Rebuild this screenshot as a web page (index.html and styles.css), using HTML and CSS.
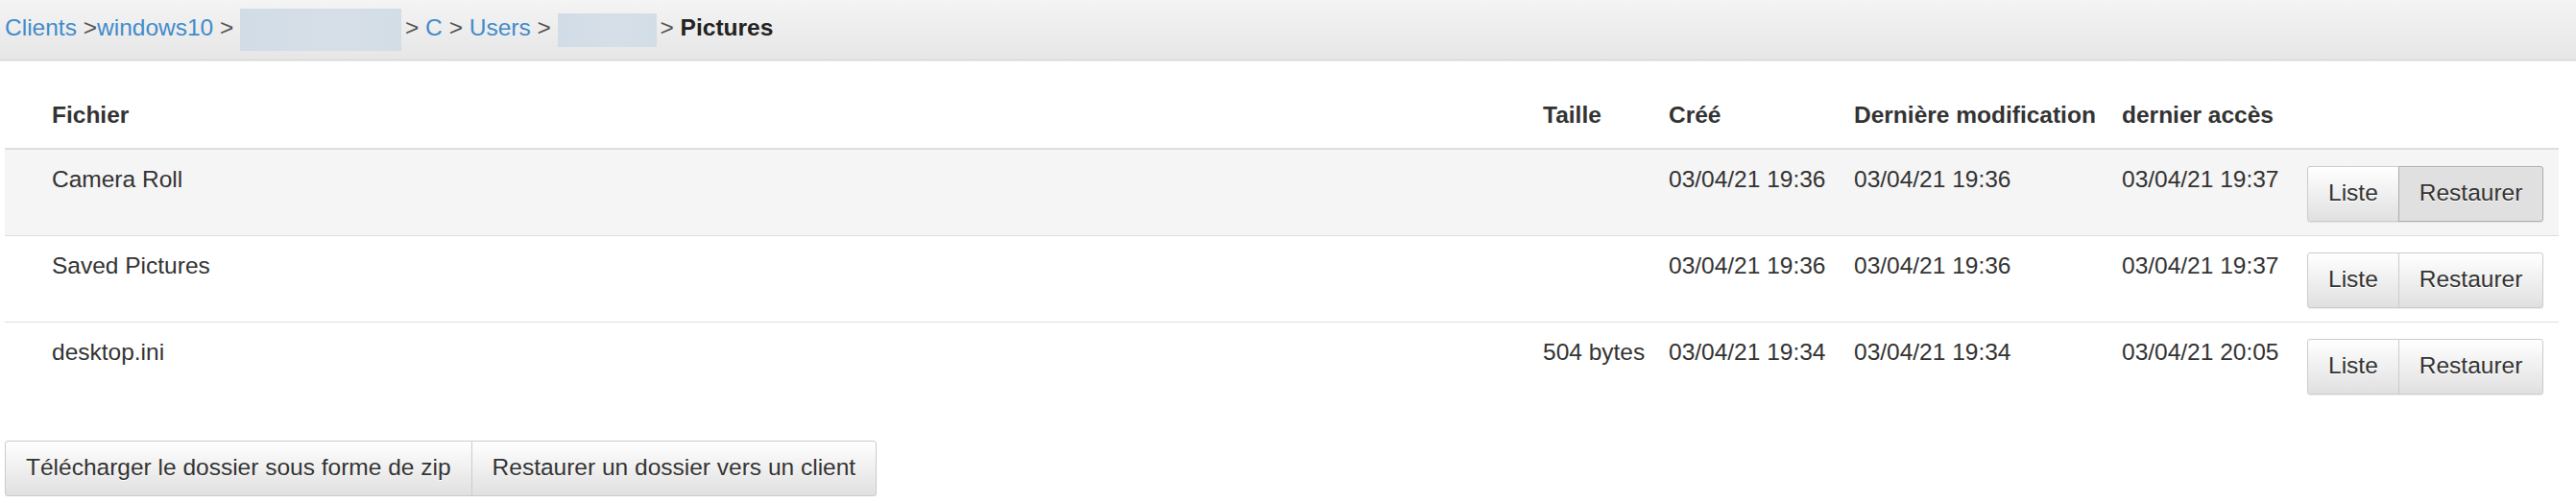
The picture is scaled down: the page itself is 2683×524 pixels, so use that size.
FILE: index.html
```html
<!DOCTYPE html>
<html lang="fr">
<head>
<meta charset="utf-8">
<title>Pictures</title>
<link rel="stylesheet" href="styles.css">
</head>
<body>
<nav class="crumbbar">
  <a href="#">Clients</a> <span class="sep">&gt;</span><a href="#">windows10</a> <span class="sep">&gt;</span> <span class="redact redact-wide"></span> <span class="sep">&gt;</span> <a href="#">C</a> <span class="sep">&gt;</span> <a href="#">Users</a> <span class="sep">&gt;</span> <span class="redact redact-small"></span> <span class="sep">&gt;</span> <strong class="current">Pictures</strong>
</nav>
<main class="content">
  <table class="files">
    <thead>
      <tr>
        <th class="col-name">Fichier</th>
        <th class="col-size">Taille</th>
        <th class="col-created">Créé</th>
        <th class="col-modified">Dernière modification</th>
        <th class="col-accessed">dernier accès</th>
        <th class="col-actions"></th>
      </tr>
    </thead>
    <tbody>
      <tr class="row-hover">
        <td class="cell-name">Camera Roll</td>
        <td></td>
        <td>03/04/21 19:36</td>
        <td>03/04/21 19:36</td>
        <td>03/04/21 19:37</td>
        <td class="cell-actions"><div class="btn-group"><button class="btn">Liste</button><button class="btn is-hover">Restaurer</button></div></td>
      </tr>
      <tr>
        <td class="cell-name">Saved Pictures</td>
        <td></td>
        <td>03/04/21 19:36</td>
        <td>03/04/21 19:36</td>
        <td>03/04/21 19:37</td>
        <td class="cell-actions"><div class="btn-group"><button class="btn">Liste</button><button class="btn">Restaurer</button></div></td>
      </tr>
      <tr>
        <td class="cell-name">desktop.ini</td>
        <td>504 bytes</td>
        <td>03/04/21 19:34</td>
        <td>03/04/21 19:34</td>
        <td>03/04/21 20:05</td>
        <td class="cell-actions"><div class="btn-group"><button class="btn">Liste</button><button class="btn">Restaurer</button></div></td>
      </tr>
    </tbody>
  </table>
  <div class="btn-group">
    <button class="btn">Télécharger le dossier sous forme de zip</button><button class="btn">Restaurer un dossier vers un client</button>
  </div>
</main>
</body>
</html>
```

FILE: styles.css
```css
html, body {
  margin: 0;
  padding: 0;
}

body {
  font-family: "Liberation Sans", Arial, Helvetica, sans-serif;
  font-size: 24.5px;
  line-height: 34px;
  color: #333;
  background: #fff;
}

.crumbbar {
  box-sizing: border-box;
  height: 63px;
  padding: 9px 5px 0;
  white-space: nowrap;
  background: linear-gradient(to bottom, #f4f4f4 0%, #e6e6e6 100%);
  border-bottom: 1px solid #d6d6d6;
  box-shadow: 0 1px 0 #ececec;
}

.crumbbar a {
  color: #428bca;
  text-decoration: none;
}

.sep {
  color: #555;
}

.current {
  color: #222;
  font-weight: bold;
}

.redact {
  display: inline-block;
  vertical-align: middle;
  margin-right: -3px;
  background: linear-gradient(to right, #d2dce6, #d6dfe8 60%, #d3dde6);
}

.redact-wide {
  width: 168px;
  height: 44px;
}

.redact-small {
  width: 103px;
  height: 35px;
}

.content {
  padding: 26px 18px 0 5px;
}

.files {
  width: 100%;
  table-layout: fixed;
  border-collapse: collapse;
  margin-bottom: 34px;
}

.files th,
.files td {
  box-sizing: border-box;
  padding: 14px;
  text-align: left;
  vertical-align: top;
  white-space: nowrap;
}

.files th {
  padding-bottom: 17px;
  font-weight: bold;
  border-bottom: 2px solid #ddd;
}

.files td {
  border-top: 1px solid #ddd;
}

.files .col-name,
.files .cell-name {
  padding-left: 49px;
}

.col-size { width: 131px; }
.col-created { width: 193px; }
.col-modified { width: 279px; }
.col-accessed { width: 193px; }
.col-actions { width: 276px; }

.row-hover td {
  background: #f5f5f5;
}

.cell-actions .btn-group {
  margin-top: 3px;
}

.btn-group {
  display: flex;
}

.btn {
  font-family: inherit;
  font-size: 24.5px;
  line-height: 34px;
  padding: 10px 21px 12px;
  margin: 0;
  color: #333;
  border: 1px solid #ccc;
  border-radius: 0;
  background: linear-gradient(to bottom, #ffffff 0%, #e0e0e0 100%);
  text-shadow: 0 1px 0 #fff;
  box-shadow: inset 0 1px 0 rgba(255, 255, 255, 0.15), 0 1px 1px rgba(0, 0, 0, 0.075);
  white-space: nowrap;
  cursor: pointer;
}

.btn:first-child {
  border-radius: 3px 0 0 3px;
}

.btn + .btn {
  margin-left: -1px;
  border-radius: 0 3px 3px 0;
}

.btn.is-hover {
  background: #e0e0e0;
  border-color: #adadad;
}
```
